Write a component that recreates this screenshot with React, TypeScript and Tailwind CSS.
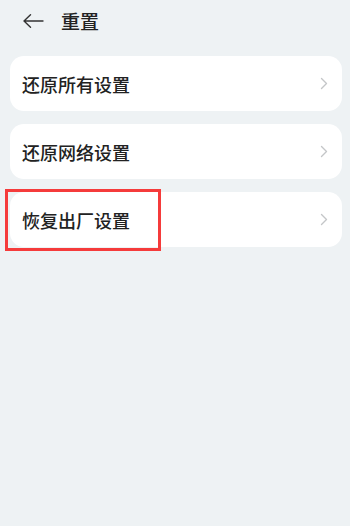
import React from "react";

const items = ["还原所有设置", "还原网络设置", "恢复出厂设置"];

function Chevron() {
  return (
    <svg width="8" height="13" viewBox="0 0 8 13" fill="none" className="shrink-0">
      <path d="M1.5 1.5 L6.5 6.5 L1.5 11.5" stroke="#c4c6c8" strokeWidth="1.4" strokeLinecap="round" strokeLinejoin="round" />
    </svg>
  );
}

export default function App() {
  return (
    <div
      className="w-[350px] h-[526px] bg-[#eef2f4] flex flex-col"
      style={{ fontFamily: '"Noto Sans CJK SC", "Noto Sans", sans-serif' }}
    >
      <div className="h-[40px] flex items-center pl-[23px] pt-[1px]">
        <svg width="21" height="14" viewBox="0 0 21 14" fill="none">
          <path d="M1 7 H20 M7.5 0.8 L1 7 L7.5 13.2" stroke="#333" strokeWidth="1.4" strokeLinecap="round" strokeLinejoin="round" />
        </svg>
        <span className="ml-[17px] text-[19px] font-medium text-[#222] leading-none">重置</span>
      </div>
      <div className="flex flex-col gap-[13px] pl-[10px] pr-[8px] pt-[16px]">
        {items.map((t, i) => (
          <div key={t} className="relative">
            <div className="h-[55px] bg-white rounded-[14px] flex items-center justify-between pl-[12px] pr-[14px]">
              <span className="text-[18px] font-medium text-[#222] leading-none">{t}</span>
              <Chevron />
            </div>
            {i === 2 && (
              <div className="absolute left-[-5px] top-[-3px] w-[156px] h-[62px] border-[3px] border-[#f53b3b]" />
            )}
          </div>
        ))}
      </div>
    </div>
  );
}
